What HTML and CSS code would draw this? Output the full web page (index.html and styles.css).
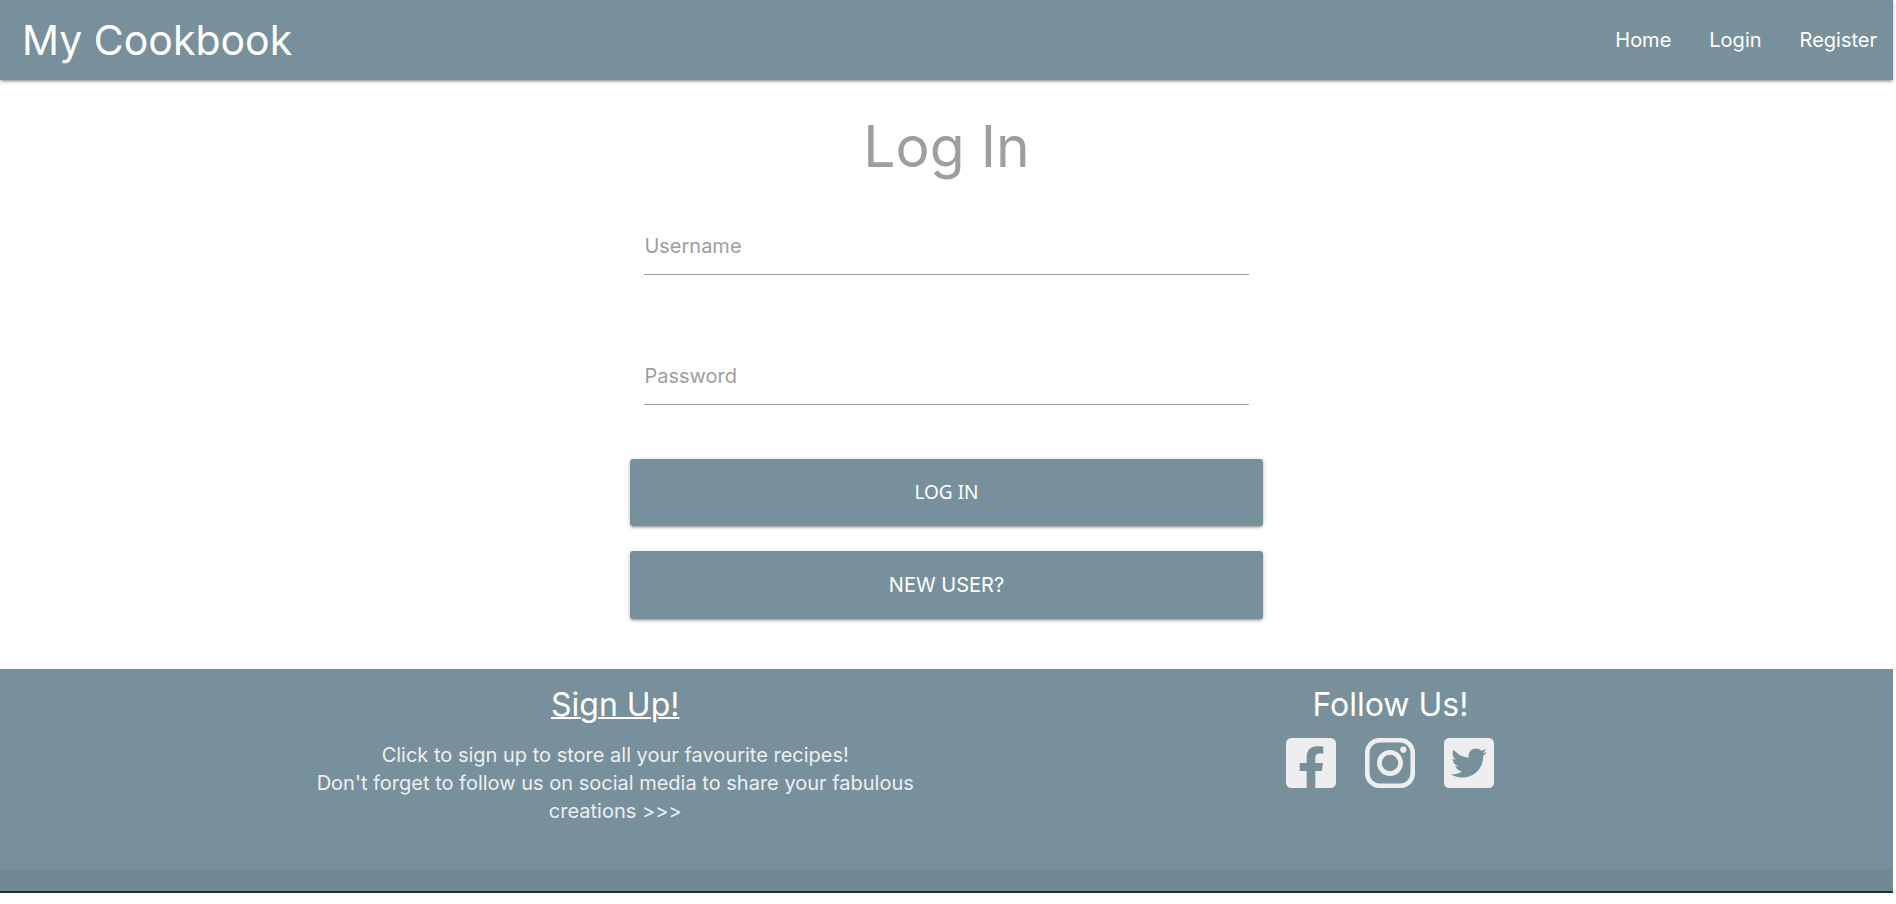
FILE: index.html
```html
<!DOCTYPE html>
<html lang="en">
<head>
  <meta charset="utf-8">
  <meta name="viewport" content="width=device-width, initial-scale=1">
  <title>My Cookbook</title>
  <link rel="stylesheet" href="styles.css">
</head>
<body>
  <header class="navbar">
    <a class="brand" href="#">My Cookbook</a>
    <nav class="nav-links">
      <a href="#">Home</a>
      <a href="#">Login</a>
      <a href="#">Register</a>
    </nav>
  </header>

  <main class="login">
    <h1 class="login-title">Log In</h1>
    <form class="login-form">
      <div class="field">
        <label for="username">Username</label>
        <input id="username" name="username" type="text">
      </div>
      <div class="field">
        <label for="password">Password</label>
        <input id="password" name="password" type="password">
      </div>
      <div class="actions">
        <button class="btn btn-submit" type="submit">LOG IN</button>
        <a class="btn" href="#">NEW USER?</a>
      </div>
    </form>
  </main>

  <footer class="footer">
    <div class="footer-content">
      <section class="signup">
        <h2><a href="#">Sign Up!</a></h2>
        <p>Click to sign up to store all your favourite recipes!<br>Don't forget to follow us on social media to share your fabulous creations &gt;&gt;&gt;</p>
      </section>
      <section class="follow">
        <h2>Follow Us!</h2>
        <div class="social">
          <a href="#" aria-label="Facebook">
            <svg viewBox="0 32 448 448"><path d="M400 32H48A48 48 0 0 0 0 80v352a48 48 0 0 0 48 48h137.25V327.69h-63V256h63v-54.64c0-62.15 37-96.48 93.67-96.48 27.14 0 55.52 4.84 55.52 4.84v61h-31.27c-30.81 0-40.42 19.12-40.42 38.73V256h68.78l-11 71.69h-57.78V480H400a48 48 0 0 0 48-48V80a48 48 0 0 0-48-48z"/></svg>
          </a>
          <a href="#" aria-label="Instagram">
            <svg viewBox="0 32 448 448"><rect class="ring" x="20" y="52" width="408" height="408" rx="112"/><circle class="ring" cx="224" cy="256" r="95"/><circle cx="343.700" cy="136.300" r="28"/></svg>
          </a>
          <a href="#" aria-label="Twitter">
            <svg viewBox="0 32 448 448"><path d="M400 32H48C21.500 32 0 53.500 0 80v352c0 26.500 21.500 48 48 48h352c26.500 0 48-21.500 48-48V80c0-26.500-21.500-48-48-48zm-48.900 158.800c.2 2.800.2 5.700.2 8.500 0 86.700-66 186.600-186.600 186.600-37.200 0-71.700-10.800-100.700-29.400 5.300.6 10.400.8 15.800.8 30.700 0 58.900-10.400 81.400-28-28.800-.6-53-19.500-61.300-45.500 10.100 1.500 19.200 1.500 29.600-1.200-30-6.100-52.500-32.500-52.500-64.400v-.8c8.700 4.900 18.900 7.900 29.600 8.300a65.447 65.447 0 0 1-29.200-54.600c0-12.200 3.200-23.400 8.900-33.100 32.300 39.800 80.800 65.800 135.200 68.600-9.300-44.500 24-80.600 64-80.600 18.900 0 35.900 7.900 47.900 20.700 14.800-2.800 29-8.300 41.600-15.800-4.900 15.200-15.200 28-28.800 36.100 13.200-1.400 26-5.100 37.800-10.200-8.900 13.100-20.100 24.700-32.900 34z"/></svg>
          </a>
        </div>
      </section>
    </div>
    <div class="footer-bar"></div>
  </footer>
</body>
</html>
```
FILE: styles.css
```css
* {
  box-sizing: border-box;
}

body {
  margin: 0;
  padding-right: 3px;
  background: #fff;
  color: #fff;
  font-family: Inter, "Open Sans", sans-serif;
  font-size: 20px;
  line-height: 28px;
}

a {
  color: inherit;
  text-decoration: none;
}

h1,
h2,
p {
  margin: 0;
  font-weight: 400;
}

.navbar {
  display: flex;
  align-items: center;
  justify-content: space-between;
  height: 80px;
  padding: 0 16px 0 22px;
  background: #78909b;
  box-shadow: 0 2px 2px rgba(0, 0, 0, .14), 0 3px 1px -2px rgba(0, 0, 0, .12), 0 1px 5px rgba(0, 0, 0, .2);
}

.brand {
  font-size: 41px;
  font-weight: 400;
  line-height: 80px;
}

.nav-links {
  display: flex;
  gap: 38px;
}

.login {
  padding: 35px 0 50px;
}

.login-title {
  color: #9e9e9e;
  font-size: 57px;
  font-weight: 400;
  line-height: 64px;
  text-align: center;
}

.login-form {
  width: 33.4%;
  margin: 0 auto;
  padding-top: 38px;
}

.field {
  display: grid;
  height: 58px;
  margin: 0 14px 72px;
}

.field label,
.field input {
  grid-area: 1 / 1;
}

.field label {
  padding-top: 15px;
  color: #9e9e9e;
}

.field input {
  width: 100%;
  border: 0;
  border-bottom: 1px solid #9e9e9e;
  outline: 0;
  background: transparent;
  font: inherit;
}

.actions {
  display: flex;
  flex-direction: column;
  gap: 25px;
  margin-top: -18px;
}

.btn {
  height: 68px;
  border: 0;
  border-radius: 3px;
  background: #78909b;
  box-shadow: 0 2px 2px rgba(0, 0, 0, .14), 0 3px 1px -2px rgba(0, 0, 0, .12), 0 1px 5px rgba(0, 0, 0, .2);
  color: #fff;
  font-family: inherit;
  font-size: 20px;
  line-height: 68px;
  text-align: center;
}

.btn-submit {
  height: 67px;
  padding: 0;
  font-family: "Noto Sans", sans-serif;
  font-size: 19px;
  line-height: 67px;
}

.footer {
  border-bottom: 2px solid #1a3538;
  background: #78909b;
}

.footer-content {
  display: flex;
  justify-content: space-between;
  width: 70%;
  min-height: 201px;
  margin: 0 auto;
  padding-top: 18px;
  text-align: center;
}

.footer h2 {
  font-size: 32px;
  line-height: 36px;
}

.signup {
  width: 50%;
  padding: 0 14px;
}

.signup a {
  text-decoration: underline;
  text-decoration-thickness: 2px;
}

.signup p {
  margin-top: 18px;
  color: #eceff1;
}

.follow {
  width: 33%;
}

.social {
  display: flex;
  justify-content: center;
  gap: 29px;
  margin-top: 15px;
}

.social svg {
  display: block;
  width: 50px;
  height: 50px;
  fill: #eee;
}

.social .ring {
  fill: none;
  stroke: #eee;
  stroke-width: 42;
}

.footer-bar {
  height: 21px;
  background: rgba(51, 51, 51, .08);
}
```
